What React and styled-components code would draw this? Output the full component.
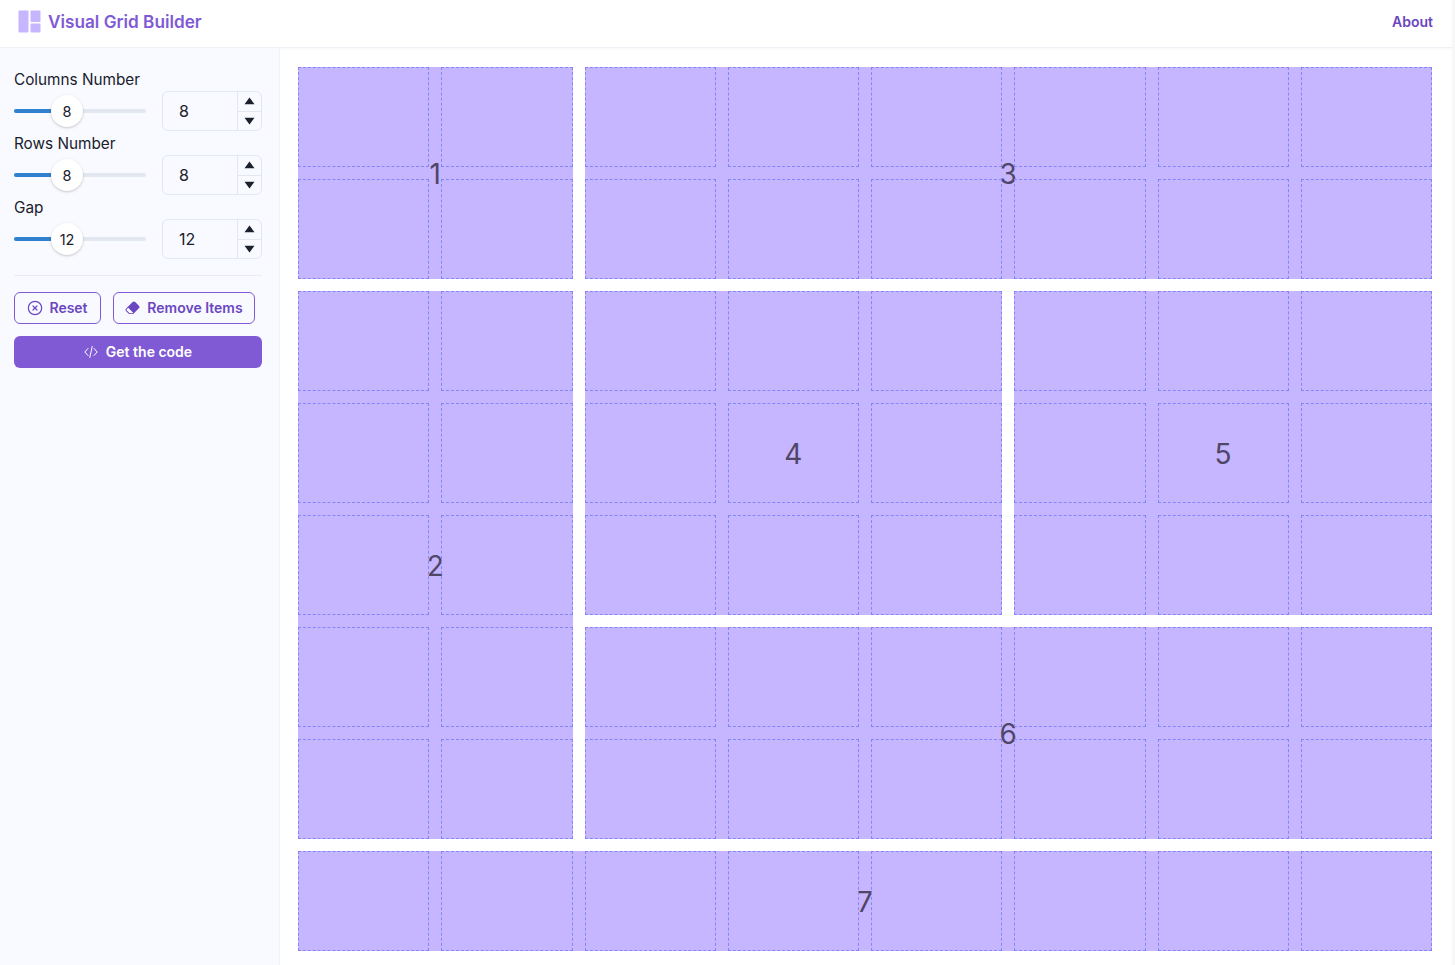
import React from 'react'
import styled, { createGlobalStyle } from 'styled-components'
import { CircleX } from 'lucide-react'
import { BsEraserFill } from 'react-icons/bs'

const GlobalStyle = createGlobalStyle`
  * { box-sizing: border-box; }
  html, body { margin: 0; padding: 0; background: #fff; }
  body { font-family: Inter, "Liberation Sans", sans-serif; color: #1a202c; }
`

const Page = styled.div`
  height: 965px;
  overflow: hidden;
  display: flex;
  flex-direction: column;
  border-right: 3px solid #f7f7f8;
`

const Header = styled.header`
  height: 48px;
  flex: none;
  display: flex;
  align-items: center;
  justify-content: space-between;
  padding: 0 19px 4px 18px;
  border-bottom: 1px solid #edf0f4;
  box-shadow: 0 1px 2px rgba(0, 0, 0, 0.03);
`

const Brand = styled.div`
  display: flex;
  align-items: center;
  gap: 7px;
`

const Title = styled.h1`
  margin: 0;
  font-size: 17.2px;
  font-weight: 600;
  color: #805ad5;
`

const AboutLink = styled.a`
  font-size: 14px;
  font-weight: 600;
  color: #6b46c1;
`

const Body = styled.div`
  flex: 1;
  min-height: 0;
  display: flex;
`

const Sidebar = styled.aside`
  width: 280px;
  flex: none;
  padding: 19px 17px 0 14px;
  background: #f8faff;
  border-right: 1px solid #f0f2f6;
`

const Label = styled.div`
  height: 24px;
  font-size: 15.3px;
  line-height: 26px;
  color: #1a202c;
`

const ControlRow = styled.div`
  height: 40px;
  display: flex;
  align-items: center;
  justify-content: space-between;
`

const Slider = styled.div`
  position: relative;
  width: 132px;
  height: 4px;
  border-radius: 2px;
  background: #e2e8f0;
`

const SliderFill = styled.div`
  height: 100%;
  width: 53px;
  border-radius: 2px 0 0 2px;
  background: #3182ce;
`

const Thumb = styled.div`
  position: absolute;
  top: -14px;
  left: 37px;
  width: 32px;
  height: 32px;
  border-radius: 50%;
  background: #fff;
  box-shadow: 0 1px 3px rgba(0, 0, 0, 0.16), 0 1px 2px rgba(0, 0, 0, 0.06);
  display: flex;
  align-items: center;
  justify-content: center;
  font-size: 14.5px;
  color: #1a202c;
`

const NumberBox = styled.div`
  width: 100px;
  height: 40px;
  display: flex;
  border: 1px solid #e2e8f0;
  border-radius: 6px;
`

const NumberValue = styled.div`
  flex: 1;
  padding-left: 16px;
  font-size: 16px;
  line-height: 38px;
  color: #1a202c;
`

const Stepper = styled.div`
  width: 24px;
  display: flex;
  flex-direction: column;
  border-left: 1px solid #e2e8f0;
`

const StepButton = styled.div`
  flex: 1;
  display: flex;
  align-items: center;
  justify-content: center;
  & + & { border-top: 1px solid #e2e8f0; }
`

const Divider = styled.hr`
  margin: 16px 0;
  border: 0;
  border-top: 1px solid #e9edf3;
`

const ButtonRow = styled.div`
  display: flex;
  gap: 12px;
  margin-bottom: 12px;
`

const OutlineButton = styled.button`
  height: 32px;
  width: ${p => p.$width}px;
  display: flex;
  align-items: center;
  justify-content: center;
  gap: ${p => p.$gap}px;
  padding: 0 0 1px;
  background: transparent;
  border: 1px solid #805ad5;
  border-radius: 6px;
  font: 600 14px Inter, "Liberation Sans", sans-serif;
  color: #6b46c1;
`

const SolidButton = styled.button`
  width: 248px;
  height: 32px;
  display: flex;
  align-items: center;
  justify-content: center;
  gap: 8px;
  padding: 0 0 1px;
  background: #805ad5;
  border: 0;
  border-radius: 6px;
  font: 600 14px Inter, "Liberation Sans", sans-serif;
  color: #fff;
`

const Main = styled.main`
  flex: 1;
  min-width: 0;
  padding: 19px 20px 14px 18px;
`

const Board = styled.div`
  width: 1134px;
  height: 884px;
  display: grid;
`

const Layer = styled.div`
  grid-area: 1 / 1;
  display: grid;
  grid-template-columns: repeat(8, 1fr);
  grid-template-rows: repeat(8, 1fr);
  gap: 12px;
`

const Item = styled.div`
  grid-column: ${p => p.$col};
  grid-row: ${p => p.$row};
  display: flex;
  align-items: center;
  justify-content: center;
  padding-top: 1px;
  background: #c6b6ff;
  font-size: 28px;
  color: #4f4668;
`

const Cell = styled.div`
  border: 1px dashed #8585fb;
`

const items = [
  { id: 1, col: '1 / 3', row: '1 / 3' },
  { id: 2, col: '1 / 3', row: '3 / 8' },
  { id: 3, col: '3 / 9', row: '1 / 3' },
  { id: 4, col: '3 / 6', row: '3 / 6' },
  { id: 5, col: '6 / 9', row: '3 / 6' },
  { id: 6, col: '3 / 9', row: '6 / 8' },
  { id: 7, col: '1 / 9', row: '8 / 9' },
]

const controls = [
  { label: 'Columns Number', value: 8 },
  { label: 'Rows Number', value: 8 },
  { label: 'Gap', value: 12 },
]

function Logo() {
  return (
    <svg width="23" height="23" viewBox="0 0 23 23" fill="#c6b6ff">
      <rect x="0.5" y="0.5" width="10" height="22" rx="1" />
      <rect x="12.5" y="0.5" width="10" height="11.5" rx="1" />
      <rect x="12.5" y="13.5" width="10" height="9" rx="1" />
    </svg>
  )
}

function Triangle({ down }) {
  return (
    <svg width="11" height="8" viewBox="0 0 11 8" fill="#1a202c">
      <path d={down ? 'M0.5 0.8h10L5.5 7.4z' : 'M0.5 7.2h10L5.5 0.6z'} />
    </svg>
  )
}

function CodeIcon() {
  return (
    <svg width="14" height="14" viewBox="0 0 14 14" fill="none" stroke="#fff" strokeWidth="1" strokeLinecap="round" strokeLinejoin="round">
      <path d="M4 3.5 0.8 7 4 10.5" />
      <path d="M10 3.5 13.2 7 10 10.5" />
      <path d="M8.2 1.5 5.8 12.5" />
    </svg>
  )
}

function Control({ label, value }) {
  return (
    <div>
      <Label>{label}</Label>
      <ControlRow>
        <Slider>
          <SliderFill />
          <Thumb>{value}</Thumb>
        </Slider>
        <NumberBox>
          <NumberValue>{value}</NumberValue>
          <Stepper>
            <StepButton><Triangle /></StepButton>
            <StepButton><Triangle down /></StepButton>
          </Stepper>
        </NumberBox>
      </ControlRow>
    </div>
  )
}

export default function App() {
  return (
    <Page>
      <GlobalStyle />
      <Header>
        <Brand>
          <Logo />
          <Title>Visual Grid Builder</Title>
        </Brand>
        <AboutLink>About</AboutLink>
      </Header>
      <Body>
        <Sidebar>
          {controls.map(c => <Control key={c.label} {...c} />)}
          <Divider />
          <ButtonRow>
            <OutlineButton $width={87} $gap={6}>
              <CircleX size={16} strokeWidth={1.8} />
              Reset
            </OutlineButton>
            <OutlineButton $width={142} $gap={7}>
              <BsEraserFill size={15} />
              Remove Items
            </OutlineButton>
          </ButtonRow>
          <SolidButton>
            <CodeIcon />
            Get the code
          </SolidButton>
        </Sidebar>
        <Main>
          <Board>
            <Layer>
              {items.map(i => (
                <Item key={i.id} $col={i.col} $row={i.row}>{i.id}</Item>
              ))}
            </Layer>
            <Layer>
              {Array.from({ length: 64 }, (_, i) => <Cell key={i} />)}
            </Layer>
          </Board>
        </Main>
      </Body>
    </Page>
  )
}
